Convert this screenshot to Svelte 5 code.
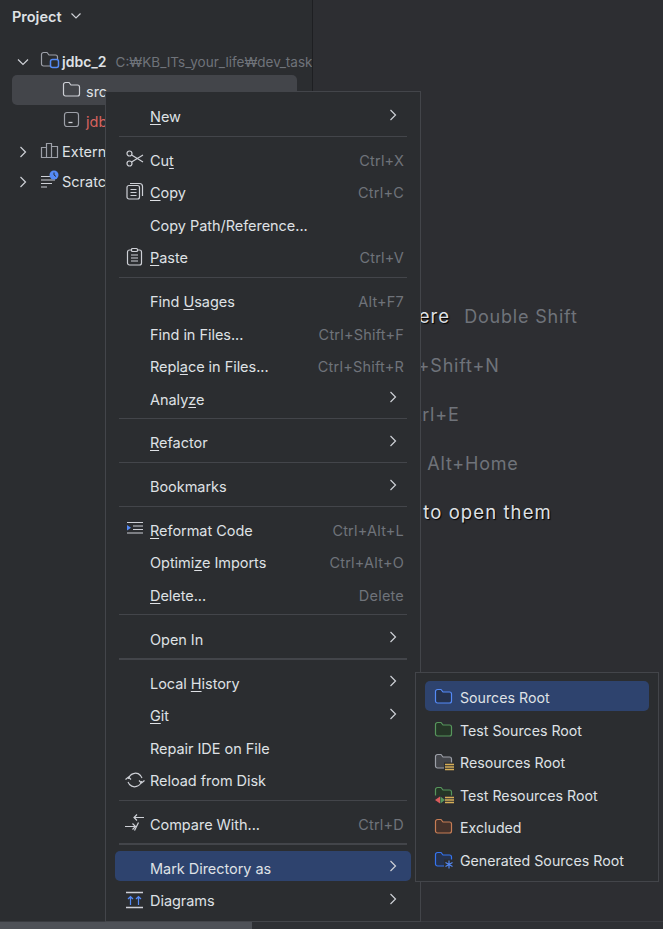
<script lang="ts">
	type Item = { label?: string; keys?: string; icon?: string; sub?: boolean; active?: boolean; sep?: boolean; thick?: boolean };

	const menu: Item[] = [
		{ label: '_New', sub: true },
		{ sep: true },
		{ label: 'Cu_t', keys: 'Ctrl+X', icon: 'cut' },
		{ label: '_Copy', keys: 'Ctrl+C', icon: 'copy' },
		{ label: 'Copy Path/Reference...' },
		{ label: '_Paste', keys: 'Ctrl+V', icon: 'paste' },
		{ sep: true },
		{ label: 'Find _Usages', keys: 'Alt+F7' },
		{ label: 'Find in Files...', keys: 'Ctrl+Shift+F' },
		{ label: 'Repl_ace in Files...', keys: 'Ctrl+Shift+R' },
		{ label: 'Analy_ze', sub: true },
		{ sep: true },
		{ label: '_Refactor', sub: true },
		{ sep: true },
		{ label: 'Bookmarks', sub: true },
		{ sep: true },
		{ label: '_Reformat Code', keys: 'Ctrl+Alt+L', icon: 'reformat' },
		{ label: 'Optimi_ze Imports', keys: 'Ctrl+Alt+O' },
		{ label: '_Delete...', keys: 'Delete' },
		{ sep: true },
		{ label: 'Open In', sub: true },
		{ sep: true, thick: true },
		{ label: 'Local _History', sub: true },
		{ label: '_Git', sub: true },
		{ label: 'Repair IDE on File' },
		{ label: 'Reload from Disk', icon: 'reload' },
		{ sep: true },
		{ label: 'Compare With...', keys: 'Ctrl+D', icon: 'compare' },
		{ sep: true, thick: true },
		{ label: 'Mark Directory as', sub: true, active: true },
		{ label: 'Diagrams', sub: true, icon: 'diagrams' }
	];

	const roots = [
		{ label: 'Sources Root', kind: 'sources', active: true },
		{ label: 'Test Sources Root', kind: 'test' },
		{ label: 'Resources Root', kind: 'resources' },
		{ label: 'Test Resources Root', kind: 'testres' },
		{ label: 'Excluded', kind: 'excluded' },
		{ label: 'Generated Sources Root', kind: 'generated' }
	];

	// indent: rows of the empty-editor hint do not share a left edge
	const hints = [
		{ text: 'Search Everywhere', keys: 'Double Shift', indent: -19 },
		{ text: 'Go to File', keys: 'Ctrl+Shift+N', indent: -4 },
		{ text: 'Recent Files', keys: 'Ctrl+E', indent: -12 },
		{ text: 'Navigation Bar', keys: 'Alt+Home', indent: -10 },
		{ text: 'Drop files here to open them', keys: '', indent: -8 }
	];

	function parts(label: string) {
		const i = label.indexOf('_');
		if (i < 0) return [label, '', ''];
		return [label.slice(0, i), label[i + 1], label.slice(i + 2)];
	}

	const folder = 'M1.5 4.5a2 2 0 0 1 2-2H7l2 2.500h6.500a2 2 0 0 1 2 2v7a2 2 0 0 1-2 2h-12a2 2 0 0 1-2-2z';
	const folderColors: Record<string, [string, string]> = {
		sources: ['#548af7', '#25324d'],
		test: ['#57965c', '#253627'],
		resources: ['#9da0a8', '#43454a'],
		testres: ['#57965c', '#253627'],
		excluded: ['#c77d55', '#45322b'],
		generated: ['#3574f0', '#25324d']
	};
</script>

{#snippet chevron()}
	<svg class="arrow" viewBox="0 0 10 14" width="10" height="14"><path d="M2.5 2l5 5-5 5" fill="none" stroke="#ced0d6" stroke-width="1.2" /></svg>
{/snippet}

{#snippet menuIcon(name: string)}
	<svg viewBox="0 0 20 20" width="20" height="20" fill="none" stroke="#ced0d6" stroke-width="1.2">
		{#if name === 'cut'}
			<circle cx="4.5" cy="4.5" r="2.5" />
			<circle cx="4.5" cy="14.5" r="2.500" />
			<path d="M6.600 5.900L18 13M6.600 13.100L18 6" />
		{:else if name === 'copy'}
			<rect x="2" y="3.500" width="12.500" height="13.500" rx="2" />
			<path d="M5 1.500h9.500a3 3 0 0 1 3 3V14" />
			<path d="M5.500 7.500h6M5.500 10.500h6M5.500 13.500h6" />
		{:else if name === 'paste'}
			<rect x="2.500" y="3" width="14" height="15" rx="2" />
			<rect x="6.500" y="1.500" width="6" height="3" rx="1" fill="#2b2d30" />
			<path d="M6 8h7M6 11h7M6 14h7" />
		{:else if name === 'reformat'}
			<path d="M2 3.500h16M8 7h10M8 10.500h10M2 14h16" />
			<path d="M2 6l4 2.800-4 2.800z" fill="#548af7" stroke="none" />
		{:else if name === 'reload'}
			<path d="M3.500 9a7 7 0 0 1 12-3.500L17 8M16.500 11a7 7 0 0 1-12 3.500L3 12" />
			<path d="M0.500 9.500L3.500 7l2.500 2.500M19.500 10.500L16.500 13 14 10.500" />
		{:else if name === 'compare'}
			<path d="M9 4.500h10M12 1.500l-3 3 3 3" />
			<path d="M0 13.500h10.500M7.500 10.500l3 3-3 3" />
			<path d="M13.500 9.500L9.500 17.500" />
		{:else if name === 'diagrams'}
			<path d="M1 2.500h17M1 17.500h17" stroke="#ced0d6" stroke-width="1.600" />
			<path d="M5.500 15V6.500M3 9l2.500-2.500L8 9M13.500 15V6.500M11 9l2.500-2.500L16 9" stroke="#548af7" />
		{/if}
	</svg>
{/snippet}

<div class="window">
	<aside class="project">
		<header class="project-head">
			<span class="project-title">Project</span>
			<svg viewBox="0 0 12 8" width="12" height="8"><path d="M1.500 1.500L6 6l4.500-4.500" fill="none" stroke="#ced0d6" stroke-width="1.200" /></svg>
		</header>

		<div class="tree">
			<div class="tree-row">
				<svg class="twist" viewBox="0 0 12 8" width="12" height="8"><path d="M1 1.500L6 6.500l5-5" fill="none" stroke="#ced0d6" stroke-width="1.200" /></svg>
				<svg class="node-icon" viewBox="0 0 20 20" width="20" height="20">
					<path d={folder} fill="none" stroke="#9da0a8" stroke-width="1.200" />
					<rect x="10.500" y="9.500" width="8" height="8" rx="2" fill="#2b2d30" stroke="#548af7" stroke-width="1.500" />
				</svg>
				<b class="module">jdbc_2</b>
				<span class="path">C:₩KB_ITs_your_life₩dev_task</span>
			</div>
			<div class="tree-row selected nested">
				<svg class="node-icon" viewBox="0 0 20 20" width="20" height="20"><path d={folder} fill="none" stroke="#ced0d6" stroke-width="1.200" /></svg>
				<span>src</span>
			</div>
			<div class="tree-row nested">
				<svg class="node-icon" viewBox="0 0 20 20" width="20" height="20">
					<rect x="2.500" y="2.500" width="14" height="14" rx="2.500" fill="none" stroke="#9da0a8" stroke-width="1.200" />
					<path d="M6.500 12.500h4" stroke="#ced0d6" stroke-width="1.300" />
				</svg>
				<span class="red">jdbc_2.iml</span>
			</div>
			<div class="tree-row">
				<svg class="twist" viewBox="0 0 8 12" width="8" height="12"><path d="M1.500 1l5 5-5 5" fill="none" stroke="#ced0d6" stroke-width="1.200" /></svg>
				<svg class="node-icon" viewBox="0 0 20 20" width="20" height="20" fill="none" stroke="#9da0a8" stroke-width="1.200">
					<path d="M1.500 7.500h5v10h-5zM6.500 3.500h5v14h-5zM11.500 6.500h6v11h-6z" />
				</svg>
				<span>External Libraries</span>
			</div>
			<div class="tree-row">
				<svg class="twist" viewBox="0 0 8 12" width="8" height="12"><path d="M1.500 1l5 5-5 5" fill="none" stroke="#ced0d6" stroke-width="1.200" /></svg>
				<svg class="node-icon" viewBox="0 0 20 20" width="20" height="20">
					<path d="M1 6.500h9M1 10h14M1 13.500h11M1 17h6" stroke="#ced0d6" stroke-width="1.200" />
					<circle cx="14" cy="5" r="4.500" fill="#548af7" />
					<path d="M14 2.500V5l2 1.500" fill="none" stroke="#2b2d30" stroke-width="1" />
				</svg>
				<span>Scratches and Consoles</span>
			</div>
		</div>
	</aside>

	<main class="editor">
		<div class="hints">
			{#each hints as hint}
				<div class="hint" style="margin-left: {hint.indent}px">
					<span class="hint-text">{hint.text}</span>
					{#if hint.keys}<span class="hint-keys">{hint.keys}</span>{/if}
				</div>
			{/each}
		</div>
	</main>

	<div class="track"><div class="thumb"></div></div>

	<div class="menu context">
		{#each menu as item}
			{#if item.sep}
				<div class="sep" class:thick={item.thick}></div>
			{:else}
				{@const [before, mark, after] = parts(item.label ?? '')}
				<div class="item" class:active={item.active}>
					<span class="slot">
						{#if item.icon}{@render menuIcon(item.icon)}{/if}
					</span>
					<span class="label">{before}{#if mark}<u>{mark}</u>{/if}{after}</span>
					{#if item.keys}<span class="keys">{item.keys}</span>{/if}
					{#if item.sub}{@render chevron()}{/if}
				</div>
			{/if}
		{/each}
	</div>

	<div class="menu submenu">
		{#each roots as root}
			<div class="item" class:active={root.active}>
				<svg class="root-icon" viewBox="0 0 20 20" width="20" height="20">
					<path d={folder} fill={folderColors[root.kind][1]} stroke={folderColors[root.kind][0]} stroke-width="1.200" />
					{#if root.kind === 'resources' || root.kind === 'testres'}
						<rect x="10" y="10.500" width="10" height="9" fill="#2b2d30" />
						<path d="M11 12.500h9M11 15h9M11 17.500h9" stroke="#d6ae58" stroke-width="1.400" />
					{/if}
					{#if root.kind === 'testres'}
						<rect x="0" y="10.500" width="11" height="9" fill="#2b2d30" />
						<path d="M6 11.500l-5 3.500 5 3.500z" fill="#db5c5c" />
						<path d="M6.500 11.500l4.500 3.500-4.500 3.500z" fill="#57965c" />
					{/if}
					{#if root.kind === 'generated'}
						<rect x="10" y="9.500" width="10" height="10" fill="#2b2d30" />
						<path d="M15 10.500v8M11.500 12.500l7 4M18.500 12.500l-7 4" stroke="#548af7" stroke-width="1.100" />
					{/if}
				</svg>
				<span class="label">{root.label}</span>
			</div>
		{/each}
	</div>
</div>

<style>
	:global(body) {
		margin: 0;
		background: #2b2d30;
	}

	.window {
		position: relative;
		display: flex;
		width: 663px;
		height: 929px;
		overflow: hidden;
		font-family: Inter, 'Noto Sans', sans-serif;
		font-size: 14.5px;
		color: #dfe1e5;
	}

	.project {
		flex: 0 0 312px;
		min-width: 0;
		overflow: hidden;
		background: #2b2d30;
		border-right: 1px solid #1e1f22;
	}

	.project-head {
		display: flex;
		align-items: center;
		gap: 8px;
		height: 32px;
		padding-left: 12px;
	}

	.project-title {
		font-weight: 600;
	}

	.tree {
		display: flex;
		flex-direction: column;
		margin: 12.5px 15px 0 12px;
	}

	.tree-row {
		display: flex;
		align-items: center;
		box-sizing: border-box;
		height: 30px;
		padding-top: 4px;
		white-space: nowrap;
		border-radius: 5px;
	}

	.tree-row.nested {
		padding-left: 50px;
	}

	.tree-row.selected {
		background: #43454a;
	}

	.twist {
		flex: 0 0 auto;
		margin-left: 5px;
		margin-right: 11px;
	}

	svg.twist[width='8'] {
		margin-left: 7px;
		margin-right: 13px;
	}

	.node-icon {
		flex: 0 0 auto;
		margin-right: 2px;
		margin-top: -4px;
	}

	.nested .node-icon {
		margin-right: 4px;
	}

	.module {
		font-weight: 600;
		font-size: 14px;
	}

	.path {
		margin-left: 9px;
		color: #6f737a;
		font-size: 13.5px;
	}

	.red {
		color: #d8635f;
	}

	.track {
		position: absolute;
		z-index: 1;
		left: 0;
		right: 0;
		bottom: 0;
		box-sizing: border-box;
		height: 8px;
		border-top: 1px solid #393b40;
		background: #2e3034;
	}

	.thumb {
		width: 252px;
		height: 100%;
		background: #4e5157;
	}

	.editor {
		flex: 1;
		z-index: 1;
		background: #2d2e32;
		min-width: 0;
	}

	.hints {
		display: flex;
		flex-direction: column;
		gap: 28px;
		margin-left: -33px;
		padding-top: 306px;
		font-size: 18px;
		letter-spacing: 0.8px;
		line-height: 21px;
		white-space: nowrap;
	}

	.hint {
		display: flex;
		gap: 14px;
	}

	.hint-text {
		color: #dfe1e5;
		font-size: 18.5px;
		letter-spacing: 1.1px;
		text-shadow: 1px 1px 1px #000;
	}

	.hint-keys {
		color: #6f737a;
	}

	.menu {
		position: absolute;
		z-index: 2;
		display: flex;
		flex-direction: column;
		box-sizing: border-box;
		background: #2b2d30;
		border: 1px solid #43454a;
		padding: 7px 9px;
	}

	.context {
		left: 105px;
		top: 91px;
		width: 316px;
		height: 831px;
		letter-spacing: -0.04px;
	}

	.submenu {
		left: 415px;
		top: 672px;
		width: 244px;
		height: 210px;
		padding-top: 8px;
		font-size: 14.2px;
	}

	.item {
		display: flex;
		flex: 0 0 auto;
		align-items: center;
		box-sizing: border-box;
		height: 30px;
		margin-bottom: 2.5px;
		padding-top: 5px;
		white-space: nowrap;
		border-radius: 5px;
	}

	.submenu .item {
		padding-top: 3px;
	}

	.item.active {
		background: #2e436e;
	}

	.slot {
		display: flex;
		flex: 0 0 35px;
		box-sizing: border-box;
		padding-left: 10px;
		margin-top: -2px;
	}

	.label {
		flex: 1;
	}

	.label u {
		text-underline-offset: 2px;
	}

	.keys {
		color: #6f737a;
		padding-right: 7px;
		letter-spacing: 0.2px;
	}

	.arrow {
		margin-right: 13px;
		margin-top: -4px;
	}

	.sep {
		display: flex;
		flex: 0 0 auto;
		align-items: flex-start;
		box-sizing: border-box;
		height: 11.3px;
		padding-top: 4px;
		margin: 0 4px;
	}

	.sep::before {
		content: '';
		flex: 1;
		height: 1px;
		background: #43454a;
	}

	.sep.thick::before {
		height: 2px;
	}

	.root-icon {
		flex: 0 0 auto;
		margin: -1px 6px 0 9px;
	}
</style>
